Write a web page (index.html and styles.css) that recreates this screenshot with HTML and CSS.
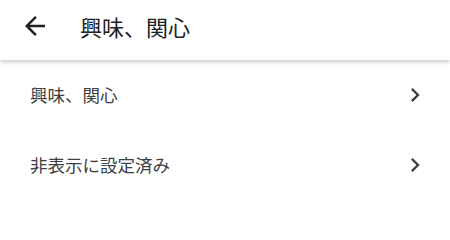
FILE: index.html
```html
<!DOCTYPE html>
<html lang="ja">
<head>
<meta charset="utf-8">
<link rel="stylesheet" href="styles.css">
</head>
<body>
<header class="appbar">
  <svg class="back" viewBox="0 0 24 24" aria-hidden="true"><path d="M20 11H7.83l5.59-5.59L12 4l-8 8 8 8 1.41-1.41L7.83 13H20v-2z"/></svg>
  <h1 class="title">興味、関心</h1>
</header>
<ul class="list">
  <li class="item"><span class="label">興味、関心</span><svg class="chev" viewBox="0 0 24 24" aria-hidden="true"><path d="M10 6L8.59 7.41 13.17 12l-4.58 4.59L10 18l6-6z"/></svg></li>
  <li class="item"><span class="label">非表示に設定済み</span><svg class="chev" viewBox="0 0 24 24" aria-hidden="true"><path d="M10 6L8.59 7.41 13.17 12l-4.58 4.59L10 18l6-6z"/></svg></li>
</ul>
</body>
</html>
```
FILE: styles.css
```css
* { box-sizing: border-box; }
html, body { margin: 0; padding: 0; background: #fff; }
body {
  font-family: "Noto Sans CJK JP", "Noto Sans", sans-serif;
  width: 450px;
  height: 207px;
  overflow: hidden;
}
.appbar {
  height: 60px;
  display: flex;
  align-items: center;
  background: #fff;
  box-shadow: 0 2px 4px rgba(0,0,0,0.22);
  position: relative;
  z-index: 1;
}
.back {
  width: 30px;
  height: 30px;
  margin-left: 20px;
  margin-top: -8px;
  fill: #202124;
  flex: none;
}
.title {
  margin: 0 0 0 30px;
  font-size: 22px;
  font-weight: 400;
  color: #202124;
  line-height: 1;
  margin-top: -8px;
}
.list {
  list-style: none;
  margin: 0;
  padding: 0;
}
.item {
  height: 70px;
  display: flex;
  align-items: center;
  justify-content: space-between;
  padding: 0 21px 0 30px;
}
.label {
  font-size: 17.5px;
  color: #3c4043;
  line-height: 1;
}
.chev {
  width: 28px;
  height: 28px;
  fill: #3c4043;
  flex: none;
}
```
